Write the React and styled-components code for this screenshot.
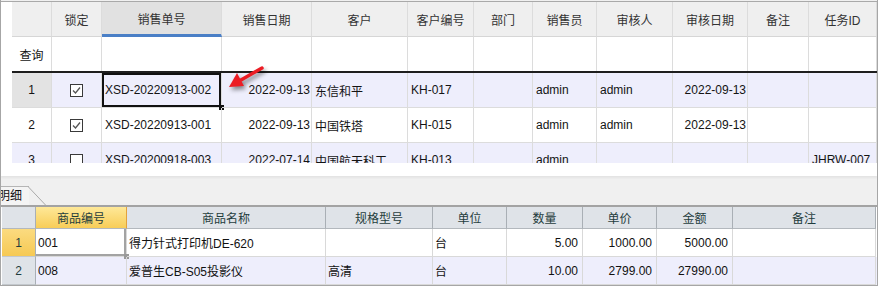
import React from 'react';
import styled, { createGlobalStyle } from 'styled-components';

const Global = createGlobalStyle`
  html, body { margin: 0; padding: 0; background: #f0f0f0; }
  body { font-family: "Liberation Sans", "Noto Sans CJK SC", sans-serif; }
`;

const TOP_COLS = [40, 50, 120, 90, 96, 66, 59, 64, 76, 75, 61, 68];
const BOTTOM_COLS = [34, 91, 199, 107, 74, 76, 74, 76, 143];
const LAVENDER = '#eeeefc';

const Frame = styled.div`
  width: 878px;
  height: 286px;
  box-sizing: border-box;
  border-left: 1px solid #a6a6a6;
  border-right: 1px solid #a6a6a6;
  border-bottom: 1px solid #a6a6a6;
  background: #f0f0f0;
  display: flex;
  flex-direction: column;
  overflow: hidden;
`;

const TopPanel = styled.div`
  position: relative;
  height: 174px;
  margin-top: 1px;
  border-top: 1px solid #a9a9a9;
  background: #fff;
  padding-left: 11px;
  box-shadow: 0 2px 2px rgba(0, 0, 0, 0.05);
`;

const Viewport = styled.div`
  height: 161px;
  overflow: hidden;
`;

const Row = styled.div`
  display: grid;
  grid-template-columns: ${({ cols }) => cols.map((c) => c + 'px').join(' ')};
  height: ${({ h }) => h}px;
  background: ${({ bg }) => bg || '#fff'};
  box-sizing: border-box;
  border-bottom: ${({ thick }) => (thick ? '2px solid #1e1e1e' : 'none')};
`;

const HeadCell = styled.div`
  display: flex;
  align-items: center;
  justify-content: center;
  font-size: 12px;
  color: #333;
  background: ${({ active }) => (active ? '#e1e1e1' : '#efefef')};
  border-right: 1px solid #dcdcdc;
  border-bottom: ${({ active }) => (active ? '3px solid #4a7fc6' : '1px solid #d6d6d6')};
  box-sizing: border-box;
`;

const Cell = styled.div`
  position: relative;
  display: flex;
  align-items: center;
  justify-content: ${({ align }) =>
    align === 'right' ? 'flex-end' : align === 'center' ? 'center' : 'flex-start'};
  padding: 0 ${({ align }) => (align === 'right' ? '1px' : '3px')};
  font-size: 12px;
  color: #141414;
  background: ${({ bg }) => bg || 'transparent'};
  border-right: 1px solid #dcdcdc;
  border-bottom: 1px solid #dcdcdc;
  box-sizing: border-box;
  white-space: nowrap;
  overflow: hidden;
  ${({ selected }) => selected && `box-shadow: inset 0 0 0 2px #111; overflow: visible;`}
`;

const Handle = styled.span`
  position: absolute;
  right: -3px;
  bottom: -3px;
  width: 5px;
  height: 5px;
  background: ${({ color }) => color};
`;

const Check = styled.span`
  width: 13px;
  height: 13px;
  box-sizing: border-box;
  border: 1px solid #3a3a3a;
  background: #fff;
  display: flex;
  align-items: center;
  justify-content: center;
`;

const Arrow = styled.svg`
  position: absolute;
  left: 222px;
  top: 58px;
  filter: drop-shadow(2px 3px 2px rgba(0, 0, 0, 0.45));
`;

const TabStrip = styled.div`
  height: 29px;
  display: flex;
  align-items: flex-end;
`;

const Tab = styled.div`
  position: relative;
  height: 18px;
  width: 28px;
  border-top: 1px solid #b5b5b5;
  background: #f4f4f4;
  font-size: 12px;
  color: #111;
  line-height: 18px;
  text-indent: -3px;
  overflow: visible;
  white-space: nowrap;
`;

const TabSlope = styled.svg`
  position: absolute;
  left: 27px;
  top: -1px;
`;

const Detail = styled.div`
  border-top: 2px solid #a3a3a3;
  padding-left: 1px;
  background: #fff;
  flex: 1;
`;

const DHead = styled.div`
  display: flex;
  align-items: center;
  justify-content: center;
  font-size: 12px;
  color: #1f3d3d;
  box-sizing: border-box;
  border-right: 1px solid ${({ active }) => (active ? '#e3a23c' : '#a9afb5')};
  border-bottom: 1px solid #b3b8bd;
  background: ${({ active }) =>
    active ? 'linear-gradient(#fee898, #f8cd58)' : '#dfe3e8'};
`;

const DCell = styled.div`
  position: relative;
  display: flex;
  align-items: center;
  justify-content: ${({ align }) =>
    align === 'right' ? 'flex-end' : align === 'center' ? 'center' : 'flex-start'};
  padding: 0 ${({ align }) => (align === 'right' ? '4px' : '2px')};
  font-size: 12px;
  color: #111;
  box-sizing: border-box;
  border-right: 1px solid #d9d9d9;
  border-bottom: 1px solid #d9d9d9;
  white-space: nowrap;
  background: ${({ bg }) => bg || 'transparent'};
  ${({ selected }) => selected && `box-shadow: inset -2px -2px 0 #a3a3a3; overflow: visible;`}
`;

const DIndex = styled(DCell)`
  color: #1f3d3d;
  border-right: 1px solid #a9afb5;
  border-bottom: 1px solid #c3c8cd;
  background: ${({ active }) => (active ? 'linear-gradient(#fbdb80, #f6c954)' : '#dfe3e8')};
`;

const topHeaders = ['', '锁定', '销售单号', '销售日期', '客户', '客户编号', '部门', '销售员', '审核人', '审核日期', '备注', '任务ID'];

const orders = [
  { no: 'XSD-20220913-002', date: '2022-09-13', cust: '东信和平', code: 'KH-017', seller: 'admin', auditor: 'admin', adate: '2022-09-13', task: '', locked: true },
  { no: 'XSD-20220913-001', date: '2022-09-13', cust: '中国铁塔', code: 'KH-015', seller: 'admin', auditor: 'admin', adate: '2022-09-13', task: '', locked: true },
  { no: 'XSD-20200918-003', date: '2022-07-14', cust: '中国航天科工', code: 'KH-013', seller: 'admin', auditor: '', adate: '', task: 'JHRW-007', locked: false },
];

const detailHeaders = ['', '商品编号', '商品名称', '规格型号', '单位', '数量', '单价', '金额', '备注'];

const items = [
  { code: '001', name: '得力针式打印机DE-620', spec: '', unit: '台', qty: '5.00', price: '1000.00', amount: '5000.00' },
  { code: '008', name: '爱普生CB-S05投影仪', spec: '高清', unit: '台', qty: '10.00', price: '2799.00', amount: '27990.00' },
];

const CheckBox = ({ checked }) => (
  <Check>
    {checked && (
      <svg width="11" height="11" viewBox="0 0 11 11">
        <path d="M2 5.5 L4.5 8 L9 2.5" fill="none" stroke="#555" strokeWidth="1.3" />
      </svg>
    )}
  </Check>
);

const App = () => (
  <>
    <Global />
    <Frame>
      <TopPanel>
        <Viewport>
          <Row cols={TOP_COLS} h={35}>
            {topHeaders.map((h, i) => (
              <HeadCell key={i} active={i === 2}>{h}</HeadCell>
            ))}
          </Row>
          <Row cols={TOP_COLS} h={36} thick>
            <Cell align="center" style={{ borderBottom: 'none' }}>查询</Cell>
            {TOP_COLS.slice(1).map((_, i) => (
              <Cell key={i} style={{ borderBottom: 'none' }} />
            ))}
          </Row>
          {orders.map((o, r) => {
            const bg = r % 2 === 0 ? LAVENDER : '#fff';
            return (
              <Row key={o.no} cols={TOP_COLS} h={35} bg={bg}>
                <Cell align="center" bg={r === 0 ? '#e3e3e3' : undefined}>{r + 1}</Cell>
                <Cell align="center"><CheckBox checked={o.locked} /></Cell>
                <Cell selected={r === 0}>
                  {o.no}
                  {r === 0 && <Handle color="#111" />}
                </Cell>
                <Cell align="right">{o.date}</Cell>
                <Cell>{o.cust}</Cell>
                <Cell>{o.code}</Cell>
                <Cell />
                <Cell>{o.seller}</Cell>
                <Cell>{o.auditor}</Cell>
                <Cell align="right">{o.adate}</Cell>
                <Cell />
                <Cell>{o.task}</Cell>
              </Row>
            );
          })}
        </Viewport>
        <Arrow width="50" height="34" viewBox="0 0 50 34">
          <line x1="39" y1="8" x2="18" y2="20" stroke="#ec1c24" strokeWidth="3.5" strokeLinecap="round" />
          <polygon points="6,27 21,26 14,13" fill="#ec1c24" />
        </Arrow>
      </TopPanel>

      <TabStrip>
        <Tab>
          明细
          <TabSlope width="20" height="20" viewBox="0 0 20 20">
            <path d="M0 0.5 L18 19.5" stroke="#a9a9a9" strokeWidth="1" fill="none" />
          </TabSlope>
        </Tab>
      </TabStrip>

      <Detail>
        <Row cols={BOTTOM_COLS} h={22}>
          {detailHeaders.map((h, i) => (
            <DHead key={i} active={i === 1}>{h}</DHead>
          ))}
        </Row>
        {items.map((it, r) => (
          <Row key={it.code} cols={BOTTOM_COLS} h={28} bg={r % 2 === 1 ? LAVENDER : '#fff'}>
            <DIndex align="center" active={r === 0}>{r + 1}</DIndex>
            <DCell selected={r === 0}>
              {it.code}
              {r === 0 && <Handle color="#999" />}
            </DCell>
            <DCell>{it.name}</DCell>
            <DCell>{it.spec}</DCell>
            <DCell>{it.unit}</DCell>
            <DCell align="right">{it.qty}</DCell>
            <DCell align="right">{it.price}</DCell>
            <DCell align="right">{it.amount}</DCell>
            <DCell />
          </Row>
        ))}
      </Detail>
    </Frame>
  </>
);

export default App;
